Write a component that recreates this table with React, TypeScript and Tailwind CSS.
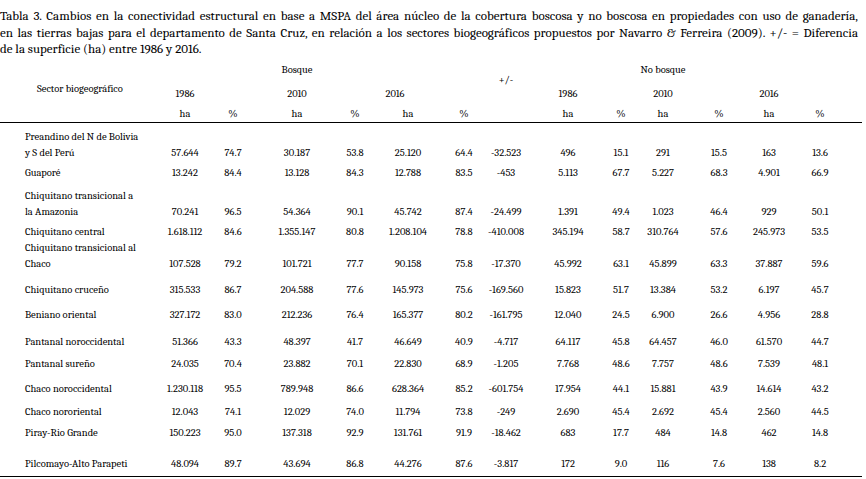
const COLS = [161, 48, 48, 80, 36, 70, 42, 42, 82, 24, 60, 52, 48, 54, 15];

type Row = {
  label: string[];
  h: number;
  values: string[];
};

const ROWS: Row[] = [
  {
    label: ["Preandino del N de Bolivia", "y S del Perú"],
    h: 39,
    values: ["57.644", "74.7", "30.187", "53.8", "25.120", "64.4", "-32.523", "496", "15.1", "291", "15.5", "163", "13.6"],
  },
  {
    label: ["Guaporé"],
    h: 20,
    values: ["13.242", "84.4", "13.128", "84.3", "12.788", "83.5", "-453", "5.113", "67.7", "5.227", "68.3", "4.901", "66.9"],
  },
  {
    label: ["Chiquitano transicional a", "la Amazonia"],
    h: 39,
    values: ["70.241", "96.5", "54.364", "90.1", "45.742", "87.4", "-24.499", "1.391", "49.4", "1.023", "46.4", "929", "50.1"],
  },
  {
    label: ["Chiquitano central"],
    h: 20,
    values: ["1.618.112", "84.6", "1.355.147", "80.8", "1.208.104", "78.8", "-410.008", "345.194", "58.7", "310.764", "57.6", "245.973", "53.5"],
  },
  {
    label: ["Chiquitano transicional al", "Chaco"],
    h: 32,
    values: ["107.528", "79.2", "101.721", "77.7", "90.158", "75.8", "-17.370", "45.992", "63.1", "45.899", "63.3", "37.887", "59.6"],
  },
  {
    label: ["Chiquitano cruceño"],
    h: 26,
    values: ["315.533", "86.7", "204.588", "77.6", "145.973", "75.6", "-169.560", "15.823", "51.7", "13.384", "53.2", "6.197", "45.7"],
  },
  {
    label: ["Beniano oriental"],
    h: 25,
    values: ["327.172", "83.0", "212.236", "76.4", "165.377", "80.2", "-161.795", "12.040", "24.5", "6.900", "26.6", "4.956", "28.8"],
  },
  {
    label: ["Pantanal noroccidental"],
    h: 27,
    values: ["51.366", "43.3", "48.397", "41.7", "46.649", "40.9", "-4.717", "64.117", "45.8", "64.457", "46.0", "61.570", "44.7"],
  },
  {
    label: ["Pantanal sureño"],
    h: 22,
    values: ["24.035", "70.4", "23.882", "70.1", "22.830", "68.9", "-1.205", "7.768", "48.6", "7.757", "48.6", "7.539", "48.1"],
  },
  {
    label: ["Chaco noroccidental"],
    h: 25,
    values: ["1.230.118", "95.5", "789.948", "86.6", "628.364", "85.2", "-601.754", "17.954", "44.1", "15.881", "43.9", "14.614", "43.2"],
  },
  {
    label: ["Chaco nororiental"],
    h: 23,
    values: ["12.043", "74.1", "12.029", "74.0", "11.794", "73.8", "-249", "2.690", "45.4", "2.692", "45.4", "2.560", "44.5"],
  },
  {
    label: ["Piray-Rio Grande"],
    h: 21,
    values: ["150.223", "95.0", "137.318", "92.9", "131.761", "91.9", "-18.462", "683", "17.7", "484", "14.8", "462", "14.8"],
  },
  {
    label: ["Pilcomayo-Alto Parapeti"],
    h: 35,
    values: ["48.094", "89.7", "43.694", "86.8", "44.276", "87.6", "-3.817", "172", "9.0", "116", "7.6", "138", "8.2"],
  },
];

const UNITS = ["ha", "%", "ha", "%", "ha", "%", "", "ha", "%", "ha", "%", "ha", "%"];

export default function App() {
  return (
    <div className="h-[479px] w-[866px] overflow-hidden bg-white text-black font-serif">
      {/* caption, lines justified like the printed page */}
      <div className="w-[858px] pt-[8px] text-[13px] leading-[16.5px]">
        <div className="whitespace-nowrap [text-align-last:justify]">
          Tabla 3. Cambios en la conectividad estructural en base a MSPA del área núcleo de la cobertura boscosa y no boscosa en propiedades con uso de ganadería,
        </div>
        <div className="whitespace-nowrap [text-align-last:justify]">
          en las tierras bajas para el departamento de Santa Cruz, en relación a los sectores biogeográficos propuestos por Navarro &amp; Ferreira (2009). +/- = Diferencia
        </div>
        <div className="whitespace-nowrap">de la superficie (ha) entre 1986 y 2016.</div>
      </div>

      <table className="mt-[4px] w-[862px] table-fixed border-collapse text-[10.5px]">
        <colgroup>
          {COLS.map((w, i) => (
            <col key={i} style={{ width: w }} />
          ))}
        </colgroup>
        <thead>
          <tr className="h-[18px]">
            <th rowSpan={2} className="pl-[37px] pt-[13px] text-left align-middle font-normal whitespace-nowrap">
              Sector biogeográfico
            </th>
            <th colSpan={2} />
            <th className="text-center font-normal whitespace-nowrap">Bosque</th>
            <th colSpan={3} />
            <th rowSpan={2} className="pb-[5px] text-center align-middle font-normal">
              +/-
            </th>
            <th colSpan={2} />
            <th className="text-center font-normal whitespace-nowrap">No bosque</th>
            <th colSpan={4} />
          </tr>
          <tr className="h-[26px]">
            <th className="pt-[5px] text-center font-normal">1986</th>
            <th />
            <th className="pt-[5px] text-center font-normal">2010</th>
            <th />
            <th className="pr-[26px] pt-[5px] text-center font-normal">2016</th>
            <th />
            <th className="pt-[5px] text-center font-normal">1986</th>
            <th />
            <th className="pt-[5px] text-center font-normal">2010</th>
            <th />
            <th className="pt-[5px] text-center font-normal">2016</th>
            <th />
            <th />
          </tr>
          <tr className="h-[16px] border-b border-black">
            <th />
            {UNITS.map((u, i) => (
              <th key={i} className="text-center font-normal leading-[16px]">
                {u}
              </th>
            ))}
            <th />
          </tr>
        </thead>
        <tbody>
          {ROWS.map((r, idx) => {
            const last = idx === ROWS.length - 1;
            return (
              <tr
                key={idx}
                style={{ height: r.h }}
                className={last ? "border-b border-black" : ""}
              >
                <td className={`pl-[25px] align-bottom leading-[16px] whitespace-nowrap ${last ? "pb-[4px]" : ""}`}>
                  {r.label.map((l, j) => (
                    <div key={j}>{l}</div>
                  ))}
                </td>
                {r.values.map((v, j) => (
                  <td
                    key={j}
                    className={`text-center align-bottom leading-[16px] whitespace-nowrap ${last ? "pb-[4px]" : ""}`}
                  >
                    {v}
                  </td>
                ))}
                <td />
              </tr>
            );
          })}
        </tbody>
      </table>
    </div>
  );
}
